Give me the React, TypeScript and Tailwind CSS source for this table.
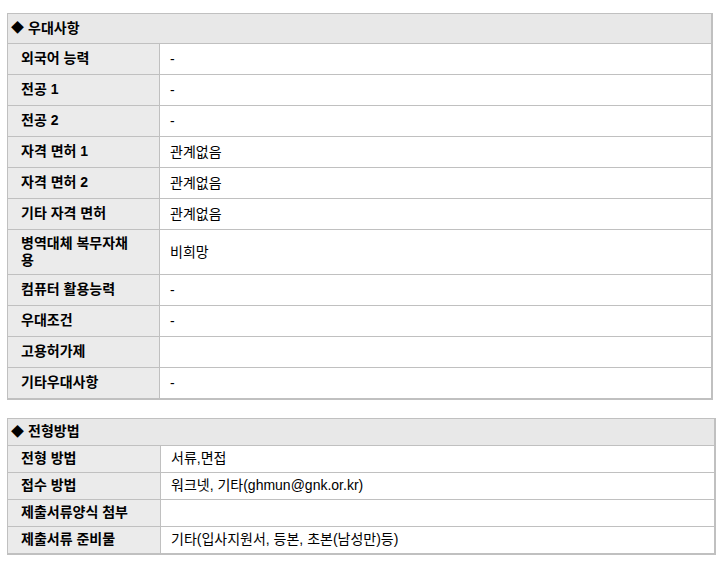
import React from "react";

type Row = { label: string; value: string; tall?: boolean };

const prefRows: Row[] = [
  { label: "외국어 능력", value: "-" },
  { label: "전공 1", value: "-" },
  { label: "전공 2", value: "-" },
  { label: "자격 면허 1", value: "관계없음" },
  { label: "자격 면허 2", value: "관계없음" },
  { label: "기타 자격 면허", value: "관계없음" },
  { label: "병역대체 복무자채용", value: "비희망", tall: true },
  { label: "컴퓨터 활용능력", value: "-" },
  { label: "우대조건", value: "-" },
  { label: "고용허가제", value: "" },
  { label: "기타우대사항", value: "-" },
];

const selRows: Row[] = [
  { label: "전형 방법", value: "서류,면접" },
  { label: "접수 방법", value: "워크넷, 기타(ghmun@gnk.or.kr)" },
  { label: "제출서류양식 첨부", value: "" },
  { label: "제출서류 준비물", value: "기타(입사지원서, 등본, 초본(남성만)등)" },
];

const font = {
  fontFamily: '"Liberation Sans", "Noto Sans CJK KR", sans-serif',
};

export default function App() {
  return (
    <div className="bg-white w-[724px] h-[565px] text-[14px] text-black" style={font}>
      {/* 우대사항 */}
      <div className="ml-[7px] pt-[13px] w-[706px]">
        <div className="border-l border-t border-r-2 border-b-2 border-[#c0c0c0]">
          <div className="h-[30px] bg-[#e8e8e8] border-b border-[#c0c0c0] flex items-center pl-[3px] pb-[2px] font-bold leading-none">
            <span className="text-[13px] mr-[4px]">◆</span>
            <span>우대사항</span>
          </div>
          {prefRows.map((r, i) => {
            const last = i === prefRows.length - 1;
            return (
              <div
                key={r.label}
                className={`flex ${r.tall ? "h-[45px]" : last ? "h-[30px]" : "h-[31px]"} ${last ? "" : "border-b border-[#c0c0c0]"}`}
              >
                <div className="w-[152px] shrink-0 bg-[#ebebeb] border-r border-[#c0c0c0] flex items-center pl-[13px] pb-[1px] font-bold leading-[17px]">
                  <span className={r.tall ? "w-[118px]" : ""}>{r.label}</span>
                </div>
                <div className="flex-1 flex items-center pl-[10px] pb-[1px] leading-none">{r.value}</div>
              </div>
            );
          })}
        </div>
      </div>

      {/* 전형방법 */}
      <div className="ml-[7px] mt-[18px] w-[709px]">
        <div className="border-l border-t border-r-2 border-b-2 border-[#c0c0c0]">
          <div className="h-[27px] bg-[#e8e8e8] border-b border-[#c0c0c0] flex items-center pl-[3px] pb-[2px] font-bold leading-none">
            <span className="text-[13px] mr-[4px]">◆</span>
            <span>전형방법</span>
          </div>
          {selRows.map((r, i) => (
            <div
              key={r.label}
              className={`flex ${i < selRows.length - 1 ? "h-[27px] border-b border-[#c0c0c0]" : "h-[26px]"}`}
            >
              <div className="w-[153px] shrink-0 bg-[#ebebeb] border-r border-[#c0c0c0] flex items-center pl-[13px] pb-[2px] font-bold leading-none">
                {r.label}
              </div>
              <div className="flex-1 flex items-center pl-[10px] pb-[2px] leading-none">{r.value}</div>
            </div>
          ))}
        </div>
      </div>
    </div>
  );
}
